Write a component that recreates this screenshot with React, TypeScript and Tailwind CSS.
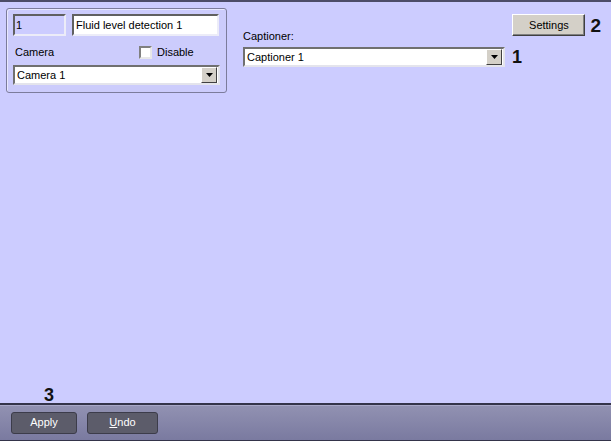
import React from "react";

function DropButton() {
  return (
    <div className="flex h-[16px] w-[16px] items-center justify-center border border-t-[#ffffff] border-l-[#ffffff] border-b-[#404040] border-r-[#404040] bg-[#d4d0c8]">
      <svg width="7" height="4" viewBox="0 0 7 4">
        <path d="M0 0h7L3.5 4z" fill="#000" />
      </svg>
    </div>
  );
}

function Combo({ value, width }: { value: string; width: string }) {
  return (
    <div
      className={`flex h-[20px] ${width} items-center justify-between border-2 border-t-[#707070] border-l-[#707070] border-b-[#e4e4ec] border-r-[#e4e4ec] bg-white pl-[2px] pr-[1px]`}
    >
      <span className="leading-none">{value}</span>
      <DropButton />
    </div>
  );
}

export default function App() {
  return (
    <div className="flex h-[441px] w-[611px] flex-col bg-[#ccccff] font-['Liberation_Sans',Arial,sans-serif] text-[11px] text-black">
      <div className="h-[2px] bg-[#4c4c68]" />

      <div className="flex flex-1 flex-col">
        <div className="flex">
          {/* object panel */}
          <div className="ml-[6px] mt-[6px] flex h-[85px] w-[221px] flex-col rounded-[3px] border border-[#7c7c9c] bg-[#ccccfc] pl-[6px] pt-[5px] shadow-[inset_1px_1px_0_#e8e8ff]">
            <div className="flex gap-[6px]">
              <div className="flex h-[22px] w-[53px] items-center border-2 border-t-[#606060] border-l-[#606060] border-b-[#ececf8] border-r-[#ececf8] bg-[#ccccff] pl-[1px]">
                1
              </div>
              <div className="flex h-[22px] w-[147px] items-center border-2 border-t-[#606060] border-l-[#606060] border-b-[#ececf8] border-r-[#ececf8] bg-white pl-[2px]">
                Fluid level detection 1
              </div>
            </div>
            <div className="flex h-[29px] items-center pt-[3px]">
              <span className="ml-[2px] w-[124px]">Camera</span>
              <span className="h-[13px] w-[13px] border-2 border-t-[#808080] border-l-[#808080] border-b-[#e8e8e8] border-r-[#e8e8e8] bg-white" />
              <span className="ml-[5px]">Disable</span>
            </div>
            <Combo value="Camera 1" width="w-[207px]" />
          </div>

          {/* captioner */}
          <div className="ml-[16px] mt-[12px] flex flex-1 flex-col pr-[10px]">
            <div className="flex items-start justify-between">
              <span className="mt-[16px] leading-[13px]">Captioner:</span>
              <div className="flex items-center">
                <button className="flex h-[22px] w-[73px] items-center justify-center border border-t-[#ffffff] border-l-[#ffffff] border-b-[#404040] border-r-[#404040] bg-[#d4d0c8] shadow-[inset_-1px_-1px_0_#808080]">
                  Settings
                </button>
                <span className="ml-[5px] text-[19px] font-bold leading-none text-[#111]">2</span>
              </div>
            </div>
            <div className="mt-[4px] flex items-center">
              <Combo value="Captioner 1" width="w-[262px]" />
              <span className="ml-[7px] text-[18px] font-bold leading-none text-[#111]">1</span>
            </div>
          </div>
        </div>

        <div className="mt-auto pl-[44px] text-[18px] font-bold leading-[16px] text-[#111]">3</div>
      </div>

      {/* bottom bar */}
      <div className="flex h-[38px] items-center gap-[10px] border-t-2 border-b border-t-[#34344a] border-b-[#34344a] bg-gradient-to-b from-[#9292b2] to-[#7a7aa0] pl-[11px] shadow-[inset_0_1px_0_#a8a8c8]">
        <button className="h-[22px] w-[66px] rounded-[3px] border border-[#3c3c4a] bg-[#5c5c6a] text-white">
          Apply
        </button>
        <button className="h-[22px] w-[71px] rounded-[3px] border border-[#3c3c4a] bg-[#5c5c6a] text-white">
          <span className="underline">U</span>ndo
        </button>
      </div>
    </div>
  );
}
